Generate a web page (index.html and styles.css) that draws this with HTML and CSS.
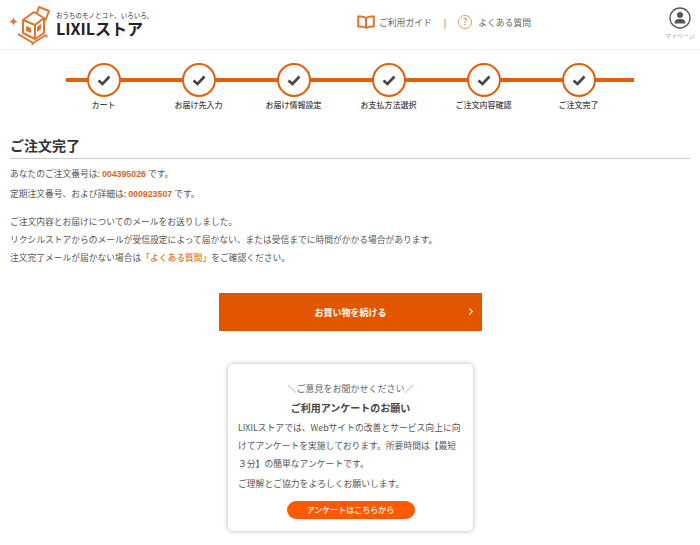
FILE: index.html
```html
<!DOCTYPE html>
<html lang="ja">
<head>
<meta charset="utf-8">
<title>ご注文完了</title>
<link rel="stylesheet" href="styles.css">
</head>
<body>
<header class="header">
  <a class="logo">
    <svg class="logo-mark" width="42" height="42" viewBox="0 0 42 42" fill="none" stroke="#e0742f" stroke-width="2" stroke-linejoin="round">
      <path d="M0 18.500c3-.5 4-1.500 4.500-5 .5 3.500 1.500 4.500 4.500 5-3 .5-4 1.500-4.500 5-.5-3.500-1.500-4.500-4.500-5z" fill="#e0742f" stroke="none"/>
      <path d="M27 13l3-9 10 4-4 10"/>
      <path d="M25 9l-11 8v13l12 6 9-6V15z" fill="#fff"/>
      <path d="M14 17l12 5 9-7M26 22v14"/>
      <path d="M17 23l5 2v5l-5-2z" fill="#e0742f" stroke="none"/>
      <path d="M28 24l4-3v5l-4 3z" fill="#e0742f" stroke="none"/>
      <path d="M9 31l15 9 13-8M24 40l-1 2M37 32l1 2" stroke-width="2"/>
    </svg>
    <span class="logo-text">
      <span class="logo-tag">おうちのモノとコト、いろいろ。</span>
      <span class="logo-name">LIXILストア</span>
    </span>
  </a>
  <nav class="nav">
    <a class="nav-link">
      <svg width="18" height="14" viewBox="0 0 18 14" fill="none" stroke="#e0742f" stroke-width="2"><path d="M9 3C7 1.500 4 1.200 1.200 1.500v10c3-.3 5.500 0 7.800 1.300 2.300-1.300 4.800-1.600 7.800-1.300v-10C14 1.200 11 1.500 9 3zM9 3v9.500"/></svg>
      ご利用ガイド
    </a>
    <span class="nav-sep">|</span>
    <a class="nav-link nav-link-gap">
      <span class="q-icon">?</span>
      よくある質問
    </a>
  </nav>
  <a class="mypage">
    <svg width="22" height="22" viewBox="0 0 22 22"><circle cx="11" cy="11" r="10" fill="#fff" stroke="#555" stroke-width="1.300"/><circle cx="11" cy="8" r="3" fill="#555"/><path d="M5.500 16.500c0-3.500 2-4.500 5.500-4.500s5.500 1 5.500 4.500z" fill="#555"/></svg>
    <span class="mypage-label">マイページ</span>
  </a>
</header>

<ol class="steps">
  <li class="step"><span class="step-circle"><svg width="14" height="11" viewBox="0 0 14 11" fill="none" stroke="#444" stroke-width="2.600"><path d="M1.500 5.500l4 3.500 7-7.500"/></svg></span><span class="step-label">カート</span></li>
  <li class="step"><span class="step-circle"><svg width="14" height="11" viewBox="0 0 14 11" fill="none" stroke="#444" stroke-width="2.600"><path d="M1.500 5.500l4 3.500 7-7.500"/></svg></span><span class="step-label">お届け先入力</span></li>
  <li class="step"><span class="step-circle"><svg width="14" height="11" viewBox="0 0 14 11" fill="none" stroke="#444" stroke-width="2.600"><path d="M1.500 5.500l4 3.500 7-7.500"/></svg></span><span class="step-label">お届け情報設定</span></li>
  <li class="step"><span class="step-circle"><svg width="14" height="11" viewBox="0 0 14 11" fill="none" stroke="#444" stroke-width="2.600"><path d="M1.500 5.500l4 3.500 7-7.500"/></svg></span><span class="step-label">お支払方法選択</span></li>
  <li class="step"><span class="step-circle"><svg width="14" height="11" viewBox="0 0 14 11" fill="none" stroke="#444" stroke-width="2.600"><path d="M1.500 5.500l4 3.500 7-7.500"/></svg></span><span class="step-label">ご注文内容確認</span></li>
  <li class="step"><span class="step-circle"><svg width="14" height="11" viewBox="0 0 14 11" fill="none" stroke="#444" stroke-width="2.600"><path d="M1.500 5.500l4 3.500 7-7.500"/></svg></span><span class="step-label">ご注文完了</span></li>
</ol>

<main class="main">
  <h1 class="title">ご注文完了</h1>
  <p class="line line-first">あなたのご注文番号は: <b class="num">004395026</b> です。</p>
  <p class="line line-second">定期注文番号、および詳細は: <b class="num">000923507</b> です。</p>
  <div class="notice">
    <p class="line">ご注文内容とお届けについてのメールをお送りしました。</p>
    <p class="line">リクシルストアからのメールが受信設定によって届かない、または受信までに時間がかかる場合があります。</p>
    <p class="line">注文完了メールが届かない場合は<a class="faq">「よくある質問」</a>をご確認ください。</p>
  </div>
  <a class="continue">お買い物を続ける<span class="chevron"></span></a>
  <section class="survey">
    <p class="survey-kicker">＼ご意見をお聞かせください／</p>
    <h2 class="survey-title">ご利用アンケートのお願い</h2>
    <p class="survey-body">LIXILストアでは、Webサイトの改善とサービス向上に向<br>けてアンケートを実施しております。所要時間は【最短<br>３分】の簡単なアンケートです。</p>
    <p class="survey-thanks">ご理解とご協力をよろしくお願いします。</p>
    <a class="survey-btn">アンケートはこちらから</a>
  </section>
</main>
</body>
</html>
```
FILE: styles.css
```css
* { box-sizing: border-box; }
html, body { margin: 0; padding: 0; }
body {
  width: 700px;
  height: 545px;
  overflow: hidden;
  background: #fff;
  color: #555;
  font-family: "Noto Sans CJK JP", "Noto Sans", sans-serif;
}
p, h1, h2, ol { margin: 0; padding: 0; }

.header {
  height: 50px;
  display: flex;
  align-items: center;
  padding: 0 5px 0 9px;
  border-bottom: 1px solid #f3f3f3;
}
.logo { display: flex; align-items: center; gap: 5px; width: 348px; padding-bottom: 2px; }
.logo-text { display: flex; flex-direction: column; color: #333; }
.logo-tag { font-size: 6.500px; line-height: 9px; }
.logo-name { font-size: 16px; line-height: 17px; font-weight: 700; color: #222; }

.nav { display: flex; align-items: center; font-size: 8.800px; color: #666; padding-bottom: 5px; }
.nav-link { display: flex; align-items: center; gap: 4px; }
.nav-sep { margin: 0 12px 0 12px; color: #555; }
.nav-link-gap { gap: 6px; }
.q-icon {
  width: 14px; height: 14px;
  border: 1px solid #e0a070;
  border-radius: 50%;
  color: #e0742f;
  font-size: 9px;
  line-height: 12px;
  text-align: center;
}
.mypage {
  margin-left: auto;
  display: flex; flex-direction: column; align-items: center;
  gap: 2.500px;
  margin-bottom: 3px;
}
.mypage-label { font-size: 6px; line-height: 7px; color: #aaa; white-space: nowrap; }

.steps {
  list-style: none;
  display: flex;
  margin: 13px 0 0 56px;
  width: 578px;
  height: 50px;
  background: linear-gradient(#e35f0b, #e35f0b) 10px 15px / 568px 4px no-repeat;
}
.step { width: 95px; display: flex; flex-direction: column; align-items: center; flex: none; }
.step-circle {
  width: 34px; height: 34px;
  border: 2.500px solid #e35f0b;
  border-radius: 50%;
  background: #fff;
  display: flex; align-items: center; justify-content: center;
}
.step-label { margin-top: 2px; font-size: 8px; line-height: 11px; font-weight: 500; color: #444; white-space: nowrap; }

.main { padding: 0 10px; }
.title {
  margin-top: 22px;
  padding-bottom: 3px;
  border-bottom: 1px solid #ccc;
  font-size: 14px;
  line-height: 20px;
  font-weight: 700;
  color: #333;
}
.line { font-size: 8.750px; line-height: 18px; color: #555; white-space: nowrap; }
.line-first { margin-top: 6px; }
.line-second { margin-top: 2px; }
.num { font-family: "Liberation Sans", sans-serif; font-size: 8.800px; color: #d9651c; font-weight: 700; }
.notice { margin-top: 10px; }
.faq { color: #e0742f; font-weight: 500; }

.continue {
  position: relative;
  display: flex;
  align-items: center;
  justify-content: center;
  width: 263px;
  height: 38px;
  margin: 26px 0 0 209px;
  background: #e25600;
  color: #fff;
  font-size: 9px;
  font-weight: 700;
}
.chevron {
  position: absolute;
  right: 10px;
  top: 16px;
  width: 5px; height: 5px;
  border-top: 1px solid #fff;
  border-right: 1px solid #fff;
  transform: rotate(45deg);
}

.survey {
  width: 245px;
  height: 167px;
  margin: 33px 0 0 218px;
  padding: 18px 10px 0;
  background: #fff;
  border-radius: 5px;
  box-shadow: 0 0 5px rgba(0,0,0,.3);
  display: flex;
  flex-direction: column;
}
.survey-kicker { font-size: 9px; line-height: 13px; text-align: center; color: #666; }
.survey-title { margin-top: 6px; font-size: 10px; line-height: 14px; font-weight: 700; text-align: center; color: #444; }
.survey-body { margin-top: 4px; font-size: 8.800px; line-height: 18px; color: #555; white-space: nowrap; }
.survey-thanks { margin-top: 2px; font-size: 8.800px; line-height: 18px; color: #555; }
.survey-btn {
  align-self: center;
  margin-top: 8px;
  width: 128px;
  height: 18px;
  border-radius: 9px;
  background: #ff5a00;
  color: #fff;
  font-size: 8px;
  font-weight: 500;
  line-height: 18px;
  text-align: center;
}
```
